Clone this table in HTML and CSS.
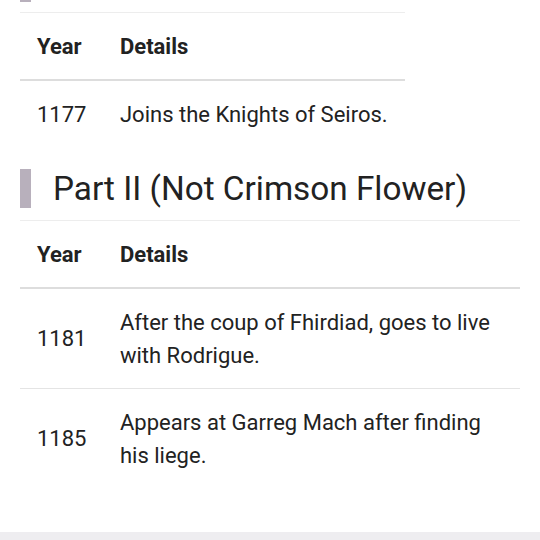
FILE: index.html
```html
<!DOCTYPE html>
<html lang="en">
<head>
<meta charset="utf-8">
<title>Timeline</title>
<link rel="stylesheet" href="styles.css">
</head>
<body>
<main class="content">
  <div class="marker-tail"></div>
  <table class="timeline">
    <thead>
      <tr><th>Year</th><th>Details</th></tr>
    </thead>
    <tbody>
      <tr><td>1177</td><td>Joins the Knights of Seiros.</td></tr>
    </tbody>
  </table>

  <h2 class="section-title">Part II (Not Crimson Flower)</h2>
  <table class="timeline full">
    <thead>
      <tr><th>Year</th><th>Details</th></tr>
    </thead>
    <tbody>
      <tr><td>1181</td><td>After the coup of Fhirdiad, goes to live with Rodrigue.</td></tr>
      <tr><td>1185</td><td>Appears at Garreg Mach after finding his liege.</td></tr>
    </tbody>
  </table>
</main>
<footer class="footer-band"></footer>
</body>
</html>
```

FILE: styles.css
```css
html, body {
  margin: 0;
  padding: 0;
  background: #ffffff;
}

body {
  font-family: Roboto, "Noto Sans", "Liberation Sans", sans-serif;
  color: #222222;
  font-size: 22px;
  line-height: 33px;
}

.content {
  padding: 0 20px;
  height: 532px;
  box-sizing: border-box;
}

.marker-tail {
  width: 11px;
  height: 2px;
  background: #b8b0bc;
  margin-bottom: 10px;
}

.timeline {
  border-collapse: separate;
  border-spacing: 0;
}

.timeline.full {
  width: 100%;
}

.timeline th,
.timeline td {
  padding: 16.5px 17px;
  text-align: left;
  vertical-align: middle;
}

.timeline th {
  font-weight: 700;
  border-top: 1px solid #ededed;
  border-bottom: 2px solid #dddddd;
}

.timeline td:first-child,
.timeline th:first-child {
  padding-right: 16.5px;
}

.timeline tbody tr + tr td {
  border-top: 1px solid #e4e4e4;
}

.section-title {
  margin: 22px 0 12px;
  font-size: 33.3px;
  font-weight: 400;
  line-height: 39px;
  color: #222222;
  border-left: 11px solid #b8b0bc;
  padding-left: 22px;
}

.footer-band {
  height: 8px;
  background: #eeedf0;
}
```
